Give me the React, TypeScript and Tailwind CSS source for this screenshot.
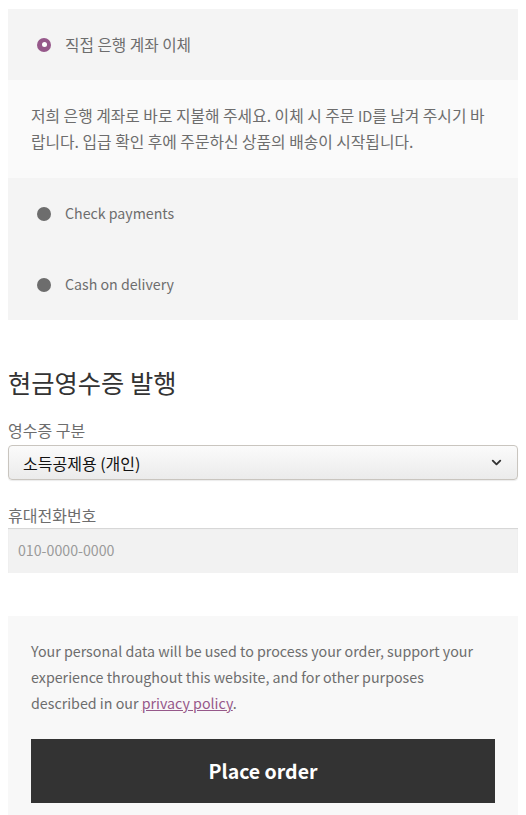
import { ChevronDown } from "lucide-react"

function Radio({ checked }: { checked?: boolean }) {
  if (checked) {
    return (
      <span className="flex h-[14px] w-[14px] shrink-0 items-center justify-center rounded-full bg-[#96588a]">
        <span className="h-[5px] w-[5px] rounded-full bg-white" />
      </span>
    )
  }
  return <span className="h-[14px] w-[14px] shrink-0 rounded-full bg-[#6d6d6d]" />
}

function Method({ label, checked, latin }: { label: string; checked?: boolean; latin?: boolean }) {
  return (
    <div className="flex h-[71px] items-center gap-[14px] px-[29px] text-[#6d6d6d]">
      <Radio checked={checked} />
      <span className={latin ? "text-[14.2px]" : "text-[15.7px]"}>{label}</span>
    </div>
  )
}

export default function App() {
  return (
    <div className="min-h-[815px] bg-white px-2 pt-[9px] font-['Noto_Sans_CJK_KR',sans-serif]">
      {/* 결제 수단 */}
      <div className="bg-[#f4f4f4]">
        <Method label="직접 은행 계좌 이체" checked />
        <div className="bg-[#fafafa] px-[23px] py-[23px] text-[15.8px] leading-[26px] text-[#6d6d6d]">
          저희 은행 계좌로 바로 지불해 주세요. 이체 시 주문 <span className="text-[14.5px]">ID</span>를 남겨 주시기 바랍니다. 입급 확인 후에 주문하신 상품의 배송이 시작됩니다.
        </div>
        <Method label="Check payments" latin />
        <Method label="Cash on delivery" latin />
      </div>

      {/* 현금영수증 */}
      <h2 className="mt-[45px] text-[25.3px] leading-[34px] text-[#333]">현금영수증 발행</h2>
      <div className="mt-[19px] text-[16px] leading-[24px] text-[#6d6d6d]">영수증 구분</div>
      <div className="mt-[3px] flex h-[35px] items-center justify-between rounded-[4px] border border-[#c9c5bf] bg-gradient-to-b from-[#fbfbfb] to-[#ebebeb] pl-[14px] pr-[13px] shadow-[0_1px_1px_rgba(0,0,0,0.08)]">
        <span className="text-[16px] text-[#111]">소득공제용 (개인)</span>
        <ChevronDown className="h-[15px] w-[15px] text-[#333]" strokeWidth={3} />
      </div>
      <div className="mt-[23px] text-[16px] leading-[24px] text-[#6d6d6d]">휴대전화번호</div>
      <div className="mt-[1px] flex h-[45px] items-center bg-[#f2f2f2] px-[10px] text-[14.2px] text-[#9a9a9a] shadow-[inset_0_1px_1px_rgba(0,0,0,0.125)]">
        010-0000-0000
      </div>

      {/* 개인정보 */}
      <div className="mt-[43px] bg-[#f8f8f8] px-[23px] pt-[22px] pb-[12px]">
        <p className="pr-[8px] text-[14.25px] leading-[26px] text-[#6d6d6d]">
          Your personal data will be used to process your order, support your experience throughout this website, and for other purposes described in our{" "}
          <a href="#" className="text-[#96588a] underline">privacy policy</a>.
        </p>
        <button className="mt-[23px] flex h-[64px] w-full items-center justify-center bg-[#333333] text-[19.5px] font-semibold text-white">
          Place order
        </button>
      </div>
    </div>
  )
}
